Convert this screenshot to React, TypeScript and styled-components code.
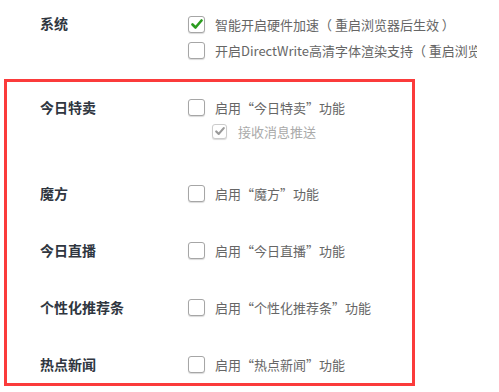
import React from 'react';
import styled, { createGlobalStyle } from 'styled-components';

const GlobalStyle = createGlobalStyle`
  html, body {
    margin: 0;
    padding: 0;
    background: #fff;
  }
  body {
    font-family: "Noto Sans CJK SC", "Noto Sans", sans-serif;
  }
`;

const Page = styled.div`
  width: 477px;
  overflow: hidden;
  padding-top: 11px;
`;

const TopSection = styled.div`
  padding-left: 40px;
  margin-bottom: 16px;
`;

const Highlight = styled.div`
  box-sizing: border-box;
  width: 411px;
  margin-left: 4px;
  border: 3px solid #fb3b3b;
  padding: 13px 0 7px 33px;
  display: flex;
  flex-direction: column;
  gap: 33px;
`;

const Row = styled.div`
  display: flex;
  align-items: flex-start;
`;

const Label = styled.div`
  width: 148px;
  flex-shrink: 0;
  font-size: 14px;
  font-weight: bold;
  line-height: 24px;
  color: #2f3640;
  white-space: nowrap;
`;

const Options = styled.div`
  display: flex;
  flex-direction: column;
`;

const Line = styled.label<{ $sub?: boolean; $tall?: boolean }>`
  display: flex;
  align-items: center;
  height: ${(p) => (p.$tall ? 26 : 24)}px;
  padding-left: ${(p) => (p.$sub ? 24 : 0)}px;
  margin-bottom: ${(p) => (p.$sub ? 5 : 0)}px;
  gap: ${(p) => (p.$sub ? 11 : 10)}px;
  font-size: 13px;
  color: ${(p) => (p.$sub ? '#aaaaaa' : '#666666')};
  white-space: pre;
`;

const Box = styled.span<{ $small?: boolean }>`
  box-sizing: border-box;
  flex-shrink: 0;
  width: ${(p) => (p.$small ? 15 : 17)}px;
  height: ${(p) => (p.$small ? 15 : 17)}px;
  border: 1px solid ${(p) => (p.$small ? '#cccccc' : '#a6a6a6')};
  border-radius: 3px;
  background: #fff;
  box-shadow: 0 1px 1px rgba(0, 0, 0, 0.15);
  display: flex;
  align-items: center;
  justify-content: center;
`;

const Check = ({ checked, sub }: { checked?: boolean; sub?: boolean }) => (
  <Box $small={sub}>
    {checked && (
      <svg width={sub ? 10 : 12} height={sub ? 10 : 12} viewBox="0 0 12 12">
        <path
          d="M1.5 6.5 L4.5 9.5 L10.5 2.5"
          fill="none"
          stroke={sub ? '#9a9a9a' : '#2b9c1f'}
          strokeWidth={2.6}
          strokeLinecap="round"
          strokeLinejoin="round"
        />
      </svg>
    )}
  </Box>
);

const features = ['今日特卖', '魔方', '今日直播', '个性化推荐条', '热点新闻'];

const App = () => (
  <>
    <GlobalStyle />
    <Page>
      <TopSection>
        <Row>
          <Label>系统</Label>
          <Options>
            <Line $tall>
              <Check checked />
              智能开启硬件加速（ 重启浏览器后生效 ）
            </Line>
            <Line $tall>
              <Check />
              开启DirectWrite高清字体渲染支持（ 重启浏览器后生效 ）
            </Line>
          </Options>
        </Row>
      </TopSection>
      <Highlight>
        {features.map((name) => (
          <Row key={name}>
            <Label>{name}</Label>
            <Options>
              <Line>
                <Check />
                启用“{name}”功能
              </Line>
              {name === '今日特卖' && (
                <Line $sub>
                  <Check sub checked />
                  接收消息推送
                </Line>
              )}
            </Options>
          </Row>
        ))}
      </Highlight>
    </Page>
  </>
);

export default App;
